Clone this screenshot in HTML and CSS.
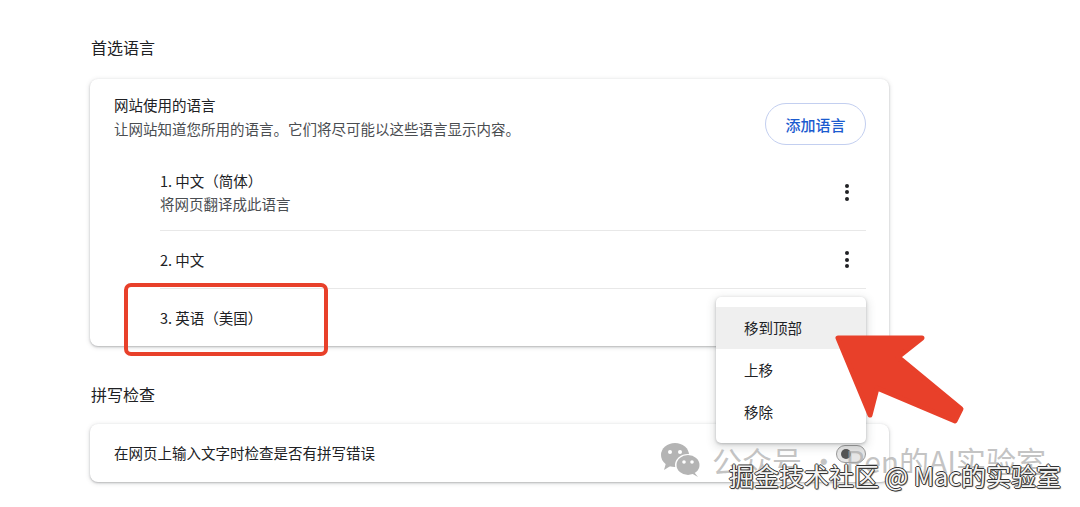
FILE: index.html
```html
<!DOCTYPE html>
<html lang="zh-CN">
<head>
<meta charset="utf-8">
<title>语言设置</title>
<link rel="stylesheet" href="styles.css">
</head>
<body>
<div class="page">
  <h2 class="section-title">首选语言</h2>
  <div class="card">
    <div class="card-head">
      <div class="head-text">
        <div class="head-title">网站使用的语言</div>
        <div class="head-sub">让网站知道您所用的语言。它们将尽可能以这些语言显示内容。</div>
      </div>
      <button class="btn">添加语言</button>
    </div>
    <ul class="lang-list">
      <li class="lang-item tall">
        <div class="lang-text">
          <div>1. 中文（简体）</div>
          <div class="lang-sub">将网页翻译成此语言</div>
        </div>
        <span class="kebab"><i></i><i></i><i></i></span>
      </li>
      <li class="lang-item">
        <div class="lang-text"><div>2. 中文</div></div>
        <span class="kebab"><i></i><i></i><i></i></span>
      </li>
      <li class="lang-item">
        <div class="lang-text"><div>3. 英语（美国）</div></div>
        <span class="mark-box"></span>
      </li>
    </ul>
    <div class="menu">
      <div class="menu-item active">移到顶部</div>
      <div class="menu-item">上移</div>
      <div class="menu-item">移除</div>
    </div>
  </div>

  <h2 class="section-title second">拼写检查</h2>
  <div class="card row-card">
    <div class="row-text">在网页上输入文字时检查是否有拼写错误</div>
    <span class="toggle"><span class="knob"></span></span>
  </div>

  <svg class="arrow" width="140" height="100" viewBox="0 0 140 100">
    <polygon points="8,8 92,8 68,27 131,79 125,91 47,58 40,85" fill="#e8402a" stroke="#e8402a" stroke-width="5" stroke-linejoin="round"/>
  </svg>

  <div class="wm-wechat">
    <svg class="wm-icon" width="42" height="36" viewBox="0 0 42 36">
      <ellipse cx="15" cy="13" rx="14" ry="12" fill="#b4b4b4"/>
      <polygon points="6,21 4,28 12,23" fill="#b4b4b4"/>
      <circle cx="10" cy="10" r="2" fill="#fff"/>
      <circle cx="20" cy="10" r="2" fill="#fff"/>
      <ellipse cx="28" cy="23" rx="13" ry="11" fill="#fff"/>
      <ellipse cx="28" cy="23" rx="11.5" ry="10" fill="#b4b4b4"/>
      <polygon points="34,30 38,35 31,31" fill="#b4b4b4"/>
      <circle cx="24" cy="20" r="1.8" fill="#fff"/>
      <circle cx="32" cy="20" r="1.8" fill="#fff"/>
    </svg>
    <span class="wm-text">公众号 · Ren的AI实验室</span>
  </div>
  <div class="wm-juejin">掘金技术社区 @ Mac的实验室</div>
</div>
</body>
</html>
```

FILE: styles.css
```css
* { box-sizing: border-box; }
html, body { margin: 0; padding: 0; background: #fff; }
body {
  font-family: "Noto Sans CJK SC", "Noto Sans", sans-serif;
  color: #202124;
  width: 1080px;
  height: 507px;
  overflow: hidden;
}
.page {
  position: relative;
  width: 1080px;
  height: 507px;
  padding: 35px 0 0 90px;
}
.section-title {
  margin: 0 0 20px 1px;
  font-size: 16px;
  font-weight: 400;
  line-height: 24px;
  color: #202124;
}
.section-title.second {
  margin-top: 36px;
  margin-bottom: 18px;
}
.card {
  position: relative;
  width: 799px;
  background: #fff;
  border-radius: 8px;
  box-shadow: 0 1px 2px rgba(60,64,67,.3), 0 1px 4px 1px rgba(60,64,67,.13);
}
.card-head {
  display: flex;
  justify-content: space-between;
  align-items: flex-start;
  padding: 16px 23px 13px 24px;
}
.head-title {
  font-size: 14.5px;
  line-height: 20px;
}
.head-sub {
  margin-top: 4px;
  font-size: 14.5px;
  line-height: 20px;
  color: #4a4d51;
}
.btn {
  margin-top: 8px;
  height: 42px;
  width: 101px;
  border-radius: 21px;
  border: 1px solid #c3cff0;
  background: #fff;
  color: #1b5bcf;
  font-family: inherit;
  font-size: 15px;
  font-weight: 500;
  padding: 0;
}
.lang-list {
  list-style: none;
  margin: 0 23px 0 70px;
  padding: 0;
}
.lang-item {
  position: relative;
  display: flex;
  align-items: center;
  justify-content: space-between;
  height: 58px;
  border-top: 1px solid #e8e8e8;
  font-size: 14.5px;
  line-height: 23px;
}
.lang-item.tall {
  height: 72px;
  border-top: none;
  padding-bottom: 4px;
}
.lang-sub { color: #4a4d51; }
.kebab {
  display: flex;
  flex-direction: column;
  align-items: center;
  gap: 2.5px;
  width: 8px;
  margin-right: 15px;
}
.kebab i {
  display: block;
  width: 4px;
  height: 4px;
  border-radius: 50%;
  background: #202124;
}
.mark-box {
  position: absolute;
  left: -36px;
  top: -6px;
  width: 204px;
  height: 73px;
  border: 4px solid #e8402a;
  border-radius: 7px;
}
.menu {
  position: absolute;
  left: 626px;
  top: 218px;
  width: 150px;
  padding: 10px 0;
  background: #fff;
  border-radius: 5px;
  box-shadow: 0 1px 3px rgba(60,64,67,.3), 0 3px 8px 2px rgba(60,64,67,.15);
  z-index: 2;
}
.menu-item {
  height: 42px;
  line-height: 42px;
  padding-left: 28px;
  font-size: 14.5px;
}
.menu-item.active { background: #efefef; }
.row-card {
  display: flex;
  align-items: center;
  justify-content: space-between;
  height: 58px;
  padding: 0 23px 0 24px;
}
.row-text {
  font-size: 14.5px;
  line-height: 20px;
}
.toggle {
  position: relative;
  width: 30px;
  height: 18px;
  border-radius: 9px;
  background: #e6e6e6;
  border: 1px solid #9a9a9a;
  margin-top: 2px;
}
.knob {
  position: absolute;
  left: 4px;
  top: 3px;
  width: 10px;
  height: 10px;
  border-radius: 50%;
  background: #555;
}
.arrow {
  position: absolute;
  left: 830px;
  top: 330px;
  z-index: 3;
}
.wm-wechat {
  position: absolute;
  left: 660px;
  top: 440px;
  display: flex;
  align-items: center;
  gap: 10px;
  z-index: 4;
  pointer-events: none;
}
.wm-icon { display: block; }
.wm-text {
  font-size: 30px;
  line-height: 40px;
  color: rgba(170,170,170,.7);
  white-space: nowrap;
}
.wm-juejin {
  position: absolute;
  left: 729px;
  top: 458px;
  font-size: 25px;
  line-height: 34px;
  color: #f4f4f4;
  white-space: nowrap;
  z-index: 5;
  text-shadow: 1px 0 0 #333, -1px 0 0 #333, 0 1px 0 #333, 0 -1px 0 #333, 1px 1px 1px #555;
}
```
